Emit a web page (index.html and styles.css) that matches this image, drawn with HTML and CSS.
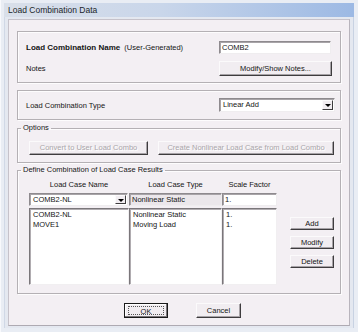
FILE: index.html
```html
<!DOCTYPE html>
<html>
<head>
<meta charset="utf-8">
<link rel="stylesheet" href="styles.css">
</head>
<body>
<div class="win">
  <div class="titlebar">Load Combination Data</div>
  <div class="client">
    <div class="panel">
      <div class="frame f1">
        <div class="row">
          <span class="lbl"><b>Load Combination Name</b> <span class="sub">(User-Generated)</span></span>
          <div class="text">COMB2</div>
        </div>
        <div class="row">
          <span class="lbl">Notes</span>
          <div class="btn notes">Modify/Show Notes...</div>
        </div>
      </div>
      <div class="frame f2">
        <div class="row">
          <span class="lbl">Load Combination Type</span>
          <div class="combo type"><span class="val">Linear Add</span><span class="arrow"><i></i></span></div>
        </div>
      </div>
      <fieldset class="group opts">
        <legend>Options</legend>
        <div class="btnrow">
          <div class="btn dis conv">Convert to User Load Combo</div>
          <div class="btn dis create">Create Nonlinear Load Case from Load Combo</div>
        </div>
      </fieldset>
      <fieldset class="group def">
        <legend>Define Combination of Load Case Results</legend>
        <div class="grid">
          <div class="hd">Load Case Name</div>
          <div class="hd">Load Case Type</div>
          <div class="hd">Scale Factor</div>
          <div></div>
          <div class="combo name"><span class="val">COMB2-NL</span><span class="arrow"><i></i></span></div>
          <div class="text ro">Nonlinear Static</div>
          <div class="text sf">1.</div>
          <div></div>
          <div class="list">COMB2-NL<br>MOVE1</div>
          <div class="list">Nonlinear Static<br>Moving Load</div>
          <div class="list">1.<br>1.</div>
          <div class="side">
            <div class="btn">Add</div>
            <div class="btn">Modify</div>
            <div class="btn">Delete</div>
          </div>
        </div>
      </fieldset>
      <div class="actions">
        <div class="btn ok"><span class="focus">OK</span></div>
        <div class="btn cancel">Cancel</div>
      </div>
    </div>
  </div>
</div>
</body>
</html>
```
FILE: styles.css
```css
* { box-sizing: border-box; }
html, body { margin: 0; padding: 0; }
body {
  font-family: "Liberation Sans", Arial, sans-serif;
  font-size: 7.5px;
  color: #151515;
  background: #eef1f6;
}
.win {
  width: 358px;
  height: 332px;
  padding: 3px 4px 4px 3px;
  background: #e9edf4;
  border-left: 1px solid #f8f9fc;
}
.titlebar {
  height: 14px;
  line-height: 15px;
  padding-left: 4px;
  font-size: 8.5px;
  color: #1b1f2a;
  background: linear-gradient(to right, #d9dfe9 0%, #c9d6ea 45%, #9cb9e4 100%);
}
.client {
  height: 311px;
  padding: 2px 3px 2px 3px;
  background: #e4e8f0;
  border-left: 1px solid #d0d8e6;
  border-right: 1px solid #c8d2e2;
}
.panel {
  height: 307px;
  background: #f3eff3;
  border: 1px solid #c6c2ca;
  border-right-color: #b8b4bc;
  border-bottom-color: #aeaab2;
  padding: 11px 8px 0 8px;
}
.frame {
  border: 1px solid #b4b0b4;
  box-shadow: inset 1px 1px 0 #fdfcfd, 1px 1px 0 #fdfcfd;
  padding-left: 8px;
}
.f1 {
  height: 52px;
  padding-top: 9px;
  display: flex;
  flex-direction: column;
  gap: 7px;
}
.f2 {
  height: 30px;
  margin-top: 7px;
  padding-top: 7px;
}
.row {
  display: grid;
  grid-template-columns: 193px auto;
  align-items: center;
}
.lbl b { font-size: 8px; }
.sub { margin-left: 2px; }
.text {
  height: 13px;
  line-height: 11px;
  padding-left: 2px;
  background: #fff;
  border: 1px solid;
  border-color: #8e8a8e #efedef #efedef #8e8a8e;
  box-shadow: inset 1px 1px 0 #a8a4a8;
  white-space: nowrap;
  overflow: hidden;
}
.f1 .text { width: 112px; }
.btn {
  height: 15px;
  line-height: 13px;
  text-align: center;
  background: #f1edf1;
  border: 1px solid;
  border-color: #fbfafb #3e3c3e #3e3c3e #fbfafb;
  box-shadow: inset -1px -1px 0 #a6a2a6;
  white-space: nowrap;
}
.notes { width: 113px; }
.combo {
  height: 14px;
  display: flex;
  background: #fff;
  border: 1px solid;
  border-color: #8e8a8e #efedef #efedef #8e8a8e;
  box-shadow: inset 1px 1px 0 #a8a4a8;
}
.combo .val {
  flex: 1;
  padding-left: 3px;
  line-height: 12px;
  white-space: nowrap;
}
.combo .arrow {
  width: 11px;
  margin: 1px 1px 1px 0;
  background: #f1edf1;
  border: 1px solid;
  border-color: #fbfafb #3e3c3e #3e3c3e #fbfafb;
  display: flex;
  align-items: center;
  justify-content: center;
}
.combo .arrow i {
  width: 0;
  height: 0;
  border-left: 3px solid transparent;
  border-right: 3px solid transparent;
  border-top: 3px solid #000;
  margin-top: 1px;
}
.type { width: 116px; }
.group {
  margin: 0;
  border: 1px solid #b4b0b4;
  box-shadow: inset 1px 1px 0 #fdfcfd, 1px 1px 0 #fdfcfd;
  padding: 8px 0 7px 11px;
}
.group legend {
  margin-left: -8px;
  padding: 0 2px;
  line-height: 10px;
  font-size: 7.5px;
}
.opts { margin-top: 3px; }
.btnrow {
  display: flex;
  gap: 10px;
}
.btn.dis {
  height: 14px;
  line-height: 12px;
  color: #a9a5a9;
  text-shadow: 1px 1px 0 #fff;
}
.conv { width: 119px; }
.create { width: 176px; }
.def {
  margin-top: 2px;
  padding-top: 5px;
  padding-bottom: 8px;
}
.grid {
  display: grid;
  grid-template-columns: 100px 93px 55px 56px;
  grid-template-rows: 10px 13px 76px;
  row-gap: 3px;
}
.hd {
  text-align: center;
  line-height: 10px;
}
.name { width: 99px; height: 13px; }
.name .val { line-height: 11px; }
.ro { background: #ebe7eb; }
.list {
  margin-top: -1px;
  background: #fff;
  border: 1px solid;
  border-color: #7a767a #f1eff1 #f1eff1 #7a767a;
  box-shadow: inset 1px 1px 0 #b0acb0;
  padding: 1px 0 0 3px;
  line-height: 10px;
  color: #151515;
}
.side {
  padding: 8px 0 0 13px;
  display: flex;
  flex-direction: column;
  gap: 6px;
}
.side .btn {
  width: 44px;
  height: 13px;
  line-height: 11px;
}
.actions {
  margin-top: 9px;
  display: flex;
  justify-content: center;
  gap: 28px;
  padding-left: 7px;
}
.ok {
  width: 44px;
  border: 1px solid #1a1a1a;
  box-shadow: inset -1px -1px 0 #7a767a, inset 1px 1px 0 #fff;
  padding: 2px 3px;
  line-height: 9px;
}
.ok .focus {
  display: block;
  height: 9px;
  border: 1px dotted #555;
}
.cancel { width: 45px; }
```
